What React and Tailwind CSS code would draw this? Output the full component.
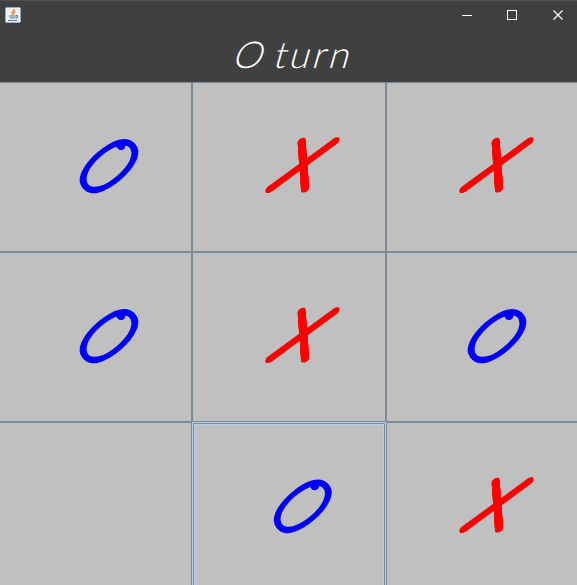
import React from "react";

function JavaIcon() {
  return (
    <svg width="16" height="16" viewBox="0 0 16 16">
      <rect x="0.5" y="0.5" width="15" height="15" rx="1" fill="#eef1f4" stroke="#8fb0c8" />
      <path d="M9.5 2C9.5 4 6 4.500 7 6.500Q7.500 7.500 8 8M10.500 4.500C8.500 5.500 8.500 6.200 9.200 7.200" fill="none" stroke="#e8812a" strokeWidth="1.300" />
      <path d="M4 9H11M11 8.500Q13.500 8.500 12.500 10L11 11M5 11H10.500M3 13.500H12" fill="none" stroke="#54799a" strokeWidth="1.200" />
    </svg>
  );
}

function TitleBar() {
  return (
    <header className="flex h-[30px] shrink-0 items-center border-t border-[#505050] bg-[#3f3f3f] pb-px pl-[5px]">
      <JavaIcon />
      <div className="ml-auto flex h-full w-[137px] items-center">
        <button aria-label="Minimize" className="flex h-full w-[54px] shrink-0 items-center justify-center">
          <svg width="10" height="10"><path d="M0 5.500H10" stroke="#fff" /></svg>
        </button>
        <button aria-label="Maximize" className="flex h-full w-[36px] shrink-0 items-center justify-center">
          <svg width="10" height="10"><rect x=".5" y=".5" width="9" height="9" fill="none" stroke="#fff" /></svg>
        </button>
        <button aria-label="Close" className="flex h-full w-[47px] shrink-0 items-center justify-center pl-[9px]">
          <svg width="10" height="10"><path d="M.5 .5L9.500 9.500M9.500 .5L.5 9.500" stroke="#fff" strokeWidth="1.200" /></svg>
        </button>
      </div>
    </header>
  );
}

function MarkO() {
  return (
    <svg className="h-full w-full font-['Lato',sans-serif] font-thin" viewBox="0 0 190 166">
      <g className="[filter:drop-shadow(1.3px_1.5px_0_#00f)_drop-shadow(1.3px_1.5px_0_#00f)]">
        <g transform="translate(107.700 80.800) rotate(-41) scale(.98 .435)">
          <text textAnchor="middle" y="36" fontSize="100" fill="#00f" stroke="#00f" strokeWidth="5" strokeLinejoin="round">O</text>
        </g>
      </g>
      <circle cx="121" cy="61.500" r="4.500" fill="#00f" />
    </svg>
  );
}

function MarkX() {
  return (
    <svg className="h-full w-full font-['Lato',sans-serif] font-thin" viewBox="0 0 190 166">
      <g className="[filter:drop-shadow(0_1.5px_0_#f00)_drop-shadow(0_1.5px_0_#f00)]">
        <g transform="matrix(.67 -.01 -.445 .68 109.500 79.500)">
          <text textAnchor="middle" y="36" fontSize="100" fill="#f00" stroke="#f00" strokeWidth="8.500" strokeLinejoin="round">X</text>
        </g>
      </g>
    </svg>
  );
}

function Mark({ value }) {
  if (value === "O") return <MarkO />;
  if (value === "X") return <MarkX />;
  return null;
}

const board = ["O", "X", "X", "O", "X", "O", "", "O", "X"];

function Cell({ mark }) {
  return (
    <button className="border border-[#7a8a99] bg-[#c0c0c0] p-px">
      <Mark value={mark} />
    </button>
  );
}

function FocusedCell({ mark }) {
  return (
    <button className="border border-[#b8cfe5] bg-[#c0c0c0]">
      <span className="block h-full w-full border border-[#7a8a99]">
        <span className="block h-full w-full border border-[#b8cfe5]">
          <Mark value={mark} />
        </span>
      </span>
    </button>
  );
}

export default function App() {
  return (
    <main className="flex h-[585px] w-[577px] flex-col overflow-hidden bg-[#404040]">
      <TitleBar />
      <h1 className="flex h-[52px] shrink-0 items-center pb-[6px] pl-[236px] font-['Lato',sans-serif] text-[37px] font-light leading-none text-white">
        <span className="inline-block w-[40px] -skew-x-[20deg]">O</span>
        <span className="inline-block -skew-x-[16deg] tracking-[3px]">turn</span>
      </h1>
      <section className="-ml-[2px] grid w-[582px] shrink-0 grid-cols-3 grid-rows-[170px_170px_170px]">
        {board.map((mark, i) => i === 7
          ? <FocusedCell key={i} mark={mark} />
          : <Cell key={i} mark={mark} />)}
      </section>
    </main>
  );
}
